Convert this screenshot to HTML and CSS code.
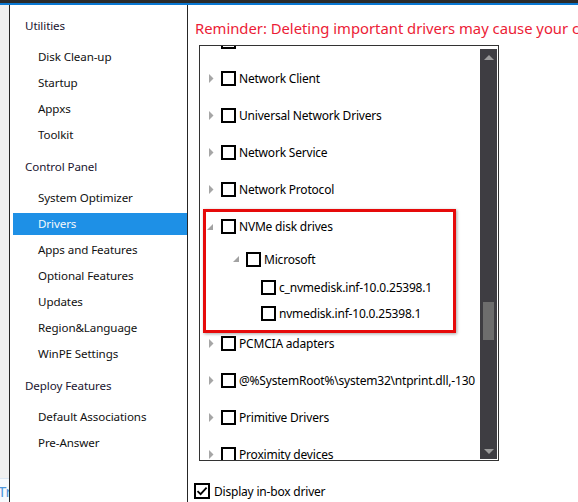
FILE: index.html
```html
<!DOCTYPE html>
<html>
<head>
<meta charset="utf-8">
<link rel="stylesheet" href="styles.css">
</head>
<body>
<div class="topbar"></div>
<div class="accent"></div>
<div class="window">
  <div class="strip">
    <div class="strip-tab">Tr</div>
  </div>
  <nav class="sidebar">
    <div class="group">
      <div class="header">Utilities</div>
      <div class="item">Disk Clean-up</div>
      <div class="item">Startup</div>
      <div class="item">Appxs</div>
      <div class="item">Toolkit</div>
    </div>
    <div class="group">
      <div class="header">Control Panel</div>
      <div class="item">System Optimizer</div>
      <div class="item selected">Drivers</div>
      <div class="item">Apps and Features</div>
      <div class="item">Optional Features</div>
      <div class="item">Updates</div>
      <div class="item">Region&amp;Language</div>
      <div class="item">WinPE Settings</div>
    </div>
    <div class="group">
      <div class="header">Deploy Features</div>
      <div class="item">Default Associations</div>
      <div class="item">Pre-Answer</div>
    </div>
  </nav>
  <main class="main">
    <div class="reminder">Reminder: Deleting important drivers may cause your computer to fail to start.</div>
    <div class="treebox">
      <div class="tree">
        <div class="row l1"><span class="exp"><svg class="arr-c" width="5" height="9" viewBox="0 0 5 9"><path d="M0 0 L4.5 4.5 L0 9 Z"/></svg></span><span class="cb"></span><span class="label"></span></div>
        <div class="row l1"><span class="exp"><svg class="arr-c" width="5" height="9" viewBox="0 0 5 9"><path d="M0 0 L4.5 4.5 L0 9 Z"/></svg></span><span class="cb"></span><span class="label">Network Client</span></div>
        <div class="row l1"><span class="exp"><svg class="arr-c" width="5" height="9" viewBox="0 0 5 9"><path d="M0 0 L4.5 4.5 L0 9 Z"/></svg></span><span class="cb"></span><span class="label">Universal Network Drivers</span></div>
        <div class="row l1"><span class="exp"><svg class="arr-c" width="5" height="9" viewBox="0 0 5 9"><path d="M0 0 L4.5 4.5 L0 9 Z"/></svg></span><span class="cb"></span><span class="label">Network Service</span></div>
        <div class="row l1"><span class="exp"><svg class="arr-c" width="5" height="9" viewBox="0 0 5 9"><path d="M0 0 L4.5 4.5 L0 9 Z"/></svg></span><span class="cb"></span><span class="label">Network Protocol</span></div>
        <div class="row l1"><span class="exp"><svg class="arr-e" width="6" height="6" viewBox="0 0 6 6"><path d="M6 0 L6 6 L0 6 Z"/></svg></span><span class="cb"></span><span class="label">NVMe disk drives</span></div>
        <div class="row l2 h28"><span class="exp"><svg class="arr-e" width="6" height="6" viewBox="0 0 6 6"><path d="M6 0 L6 6 L0 6 Z"/></svg></span><span class="cb"></span><span class="label">Microsoft</span></div>
        <div class="row l3 h28"><span class="cb"></span><span class="label">c_nvmedisk.inf-10.0.25398.1</span></div>
        <div class="row l3 h24"><span class="cb"></span><span class="label">nvmedisk.inf-10.0.25398.1</span></div>
        <div class="row l1"><span class="exp"><svg class="arr-c" width="5" height="9" viewBox="0 0 5 9"><path d="M0 0 L4.5 4.5 L0 9 Z"/></svg></span><span class="cb"></span><span class="label">PCMCIA adapters</span></div>
        <div class="row l1"><span class="exp"><svg class="arr-c" width="5" height="9" viewBox="0 0 5 9"><path d="M0 0 L4.5 4.5 L0 9 Z"/></svg></span><span class="cb"></span><span class="label">@%SystemRoot%\system32\ntprint.dll,-130</span></div>
        <div class="row l1"><span class="exp"><svg class="arr-c" width="5" height="9" viewBox="0 0 5 9"><path d="M0 0 L4.5 4.5 L0 9 Z"/></svg></span><span class="cb"></span><span class="label">Primitive Drivers</span></div>
        <div class="row l1"><span class="exp"><svg class="arr-c" width="5" height="9" viewBox="0 0 5 9"><path d="M0 0 L4.5 4.5 L0 9 Z"/></svg></span><span class="cb"></span><span class="label">Proximity devices</span></div>
      </div>
      <div class="scrollbar">
        <svg class="sb-up" width="10" height="5" viewBox="0 0 10 5"><path d="M0 5 L5 0 L10 5 Z"/></svg>
        <div class="thumb"></div>
        <svg class="sb-down" width="10" height="5" viewBox="0 0 10 5"><path d="M0 0 L10 0 L5 5 Z"/></svg>
      </div>
      <div class="highlight"></div>
    </div>
    <label class="inbox">
      <span class="cb checked"><svg width="12" height="12" viewBox="0 0 12 12"><path d="M1.5 6.2 L4.6 9.2 L10.6 2.6" fill="none" stroke="#000" stroke-width="1.8"/></svg></span>
      <span class="label">Display in-box driver</span>
    </label>
  </main>
</div>
</body>
</html>
```

FILE: styles.css
```css
* { box-sizing: border-box; }
html, body {
  margin: 0;
  padding: 0;
  width: 578px;
  height: 502px;
  overflow: hidden;
  background: #ffffff;
  font-family: "Noto Sans", "Open Sans", sans-serif;
  color: #000;
}
.topbar { height: 3px; background: #2b2b2b; }
.accent { height: 2px; background: #0a78d2; }
.window {
  display: flex;
  height: 497px;
}
.strip {
  width: 9px;
  background: #f0f0f0;
  display: flex;
  flex-direction: column;
  overflow: hidden;
}
.strip-tab {
  margin-top: auto;
  height: 24px;
  border-top: 1px solid #dbe7f3;
  background: #f7fafd;
  color: #4f97dc;
  font-size: 15px;
  line-height: 18px;
  padding-top: 3px;
  text-indent: -2px;
  white-space: nowrap;
  overflow: hidden;
}
.sidebar {
  width: 179px;
  border-left: 1px solid #262626;
  border-right: 1px solid #262626;
  background: #fff;
  padding-top: 10px;
  font-size: 11.6px;
  letter-spacing: -0.1px;
}
.group {
  display: flex;
  flex-direction: column;
}
.group + .group { margin-top: 8px; }
.header {
  height: 22px;
  line-height: 22px;
  padding-left: 15px;
  margin-bottom: 7px;
  color: #1a1530;
}
.item {
  height: 22px;
  line-height: 22px;
  margin: 2px 0 2px 3px;
  padding-left: 25px;
  color: #111;
}
.item.selected {
  background: #1e90e6;
  color: #f4f8fc;
}
.main {
  flex: 1;
  min-width: 0;
  overflow: hidden;
}
.reminder {
  margin: 13px 0 0 7px;
  height: 20px;
  line-height: 20px;
  font-size: 14.8px;
  color: #ec1c36;
  white-space: nowrap;
}
.treebox {
  position: relative;
  margin: 7px 0 0 11px;
  width: 300px;
  height: 416px;
  border: 1px solid #333;
  display: flex;
  background: #fff;
}
.tree {
  flex: 1;
  min-width: 0;
  overflow: hidden;
  font-size: 12px;
  letter-spacing: -0.2px;
}
.tree .row:first-child { margin-top: -23px; }
.row {
  display: flex;
  align-items: center;
  height: 37px;
  white-space: nowrap;
}
.row.h28 { height: 28px; }
.row.h24 { height: 24px; }
.l1 { padding-left: 6px; }
.l2 { padding-left: 31px; }
.l3 { padding-left: 61px; }
.exp {
  width: 15px;
  flex: none;
  display: flex;
  align-items: center;
}
.arr-c { margin-left: 3px; fill: #a6a6a6; }
.arr-e { margin-left: 1px; fill: #a2a2a2; }
.l2 .arr-e { margin-left: 2px; }
.cb {
  width: 15px;
  height: 15px;
  border: 2px solid #000;
  flex: none;
  background: #fff;
  display: flex;
  align-items: center;
  justify-content: center;
}
.label { margin-left: 3px; }
.scrollbar {
  width: 17px;
  flex: none;
  margin: 3px 1px 1px 0;
  background: #3e3d42;
  display: flex;
  flex-direction: column;
  align-items: center;
}
.sb-up { margin-top: 6px; fill: #9b9b9b; }
.thumb {
  width: 11px;
  height: 38px;
  margin-top: 242px;
  background: #6d6d6d;
}
.sb-down { margin-top: auto; margin-bottom: 5px; fill: #9b9b9b; }
.highlight {
  position: absolute;
  left: 3px;
  top: 163px;
  width: 253px;
  height: 124px;
  border: 3px solid #e60a0a;
  box-shadow: 1px 1px 3px rgba(0, 0, 0, 0.35);
  pointer-events: none;
}
.inbox {
  display: flex;
  align-items: center;
  margin: 22px 0 0 6px;
  height: 16px;
  font-size: 12px;
  letter-spacing: -0.2px;
}
.inbox .cb { width: 16px; height: 16px; }
.inbox .label { margin-left: 4px; }
```
